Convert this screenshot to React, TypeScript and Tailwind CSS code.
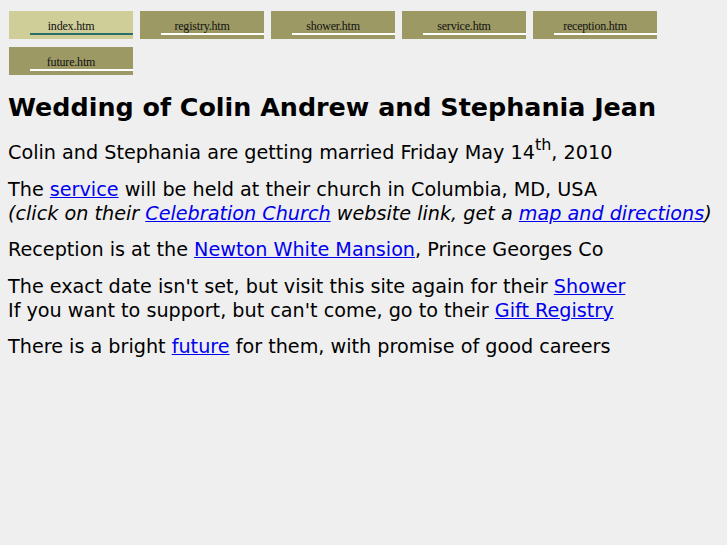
import React from 'react';

const tabs = ['index.htm', 'registry.htm', 'shower.htm', 'service.htm', 'reception.htm', 'future.htm'];

const Tab: React.FC<{ label: string; active?: boolean }> = ({ label, active }) => (
  <div
    className={`relative w-[124px] h-[28px] flex justify-center pt-[8px] ${
      active ? 'bg-[#cfcd98]' : 'bg-[#9c9964]'
    }`}
  >
    <span className="text-[12px] leading-[14px] text-[#111] tracking-[-0.2px]" style={{ fontFamily: '"Liberation Serif", serif' }}>
      {label}
    </span>
    <div className={`absolute left-[21px] right-0 top-[22px] h-[2px] ${active ? 'bg-[#2a6e6a]' : 'bg-white'}`} />
  </div>
);

const A: React.FC<{ children: React.ReactNode }> = ({ children }) => (
  <a href="#" className="text-[#0000ee] underline">
    {children}
  </a>
);

export default function App() {
  return (
    <div
      className="min-h-[545px] bg-[#efefef] text-black px-[8px] pt-[11px]"
      style={{ fontFamily: '"DejaVu Sans", sans-serif' }}
    >
      <div className="flex flex-wrap gap-x-[7px] gap-y-[8px] pl-[1px] w-[660px]">
        {tabs.map((t, i) => (
          <Tab key={t} label={t} active={i === 0} />
        ))}
      </div>

      <h1 className="text-[25.4px] font-bold leading-[30px] mt-[17px] mb-[19px]">
        Wedding of Colin Andrew and Stephania Jean
      </h1>

      <div className="text-[19.2px] leading-[24px]">
        <p>
          Colin and Stephania are getting married Friday May 14
          <span className="relative -top-[9px] text-[16px]">th</span>, 2010
        </p>
        <p className="mt-[12px]">
          The <A>service</A> will be held at their church in Columbia, MD, USA
          <br />
          <i>
            (click on their <A>Celebration Church</A> website link, get a <A>map and directions</A>)
          </i>
        </p>
        <p className="mt-[12px]">
          Reception is at the <A>Newton White Mansion</A>, Prince Georges Co
        </p>
        <p className="mt-[13px]">
          The exact date isn't set, but visit this site again for their <A>Shower</A>
          <br />
          If you want to support, but can't come, go to their <A>Gift Registry</A>
        </p>
        <p className="mt-[12px]">
          There is a bright <A>future</A> for them, with promise of good careers
        </p>
      </div>
    </div>
  );
}
